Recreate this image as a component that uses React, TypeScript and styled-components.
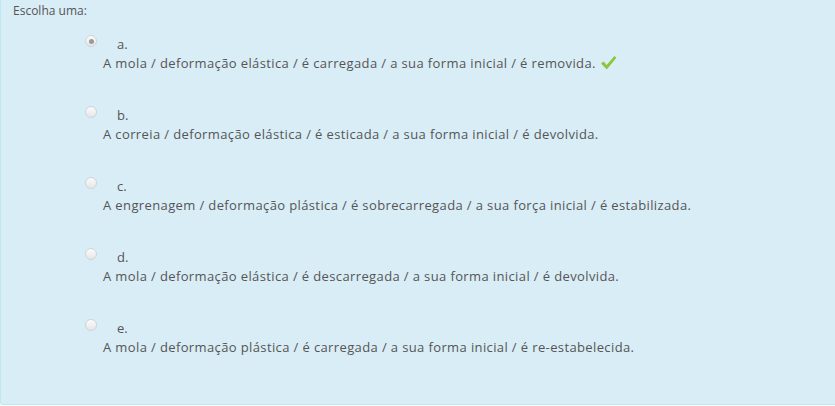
import React from "react";
import styled, { createGlobalStyle } from "styled-components";

const Global = createGlobalStyle`
  html, body { margin: 0; padding: 0; background: #fff; }
  body { font-family: "Open Sans", "Liberation Sans", sans-serif; }
`;

const Panel = styled.div`
  box-sizing: border-box;
  height: 405px;
  background: #d9edf7;
  border-left: 1px solid #bce8f1;
  border-bottom: 1px solid #bce8f1;
  border-bottom-left-radius: 3px;
  padding: 2px 0 0 12px;
  color: #555;
  font-size: 12.5px;
`;

const Prompt = styled.div`
  font-size: 12px;
  line-height: 18px;
  margin-bottom: 14px;
`;

const Options = styled.div`
  display: flex;
  flex-direction: column;
  gap: 33px;
  padding-left: 72px;
`;

const Option = styled.div`
  display: flex;
  flex-direction: column;
`;

const Head = styled.div`
  display: flex;
  align-items: center;
  height: 20px;
`;

const Radio = styled.span<{ $checked?: boolean }>`
  box-sizing: border-box;
  width: 12px;
  height: 12px;
  border-radius: 50%;
  border: 1px solid #cfd3d6;
  background: linear-gradient(#fbfbfb, #e6e6e6);
  display: flex;
  align-items: center;
  justify-content: center;
  margin-top: -6px;
  &::after {
    content: "";
    display: ${(p) => (p.$checked ? "block" : "none")};
    width: 5px;
    height: 5px;
    border-radius: 50%;
    background: #9a9a9a;
  }
`;

const Num = styled.span`
  margin-left: 20px;
  line-height: 20px;
  font-size: 13px;
`;

const Text = styled.div`
  padding-left: 18px;
  line-height: 18px;
  font-size: 13px;
  letter-spacing: 0.38px;
  display: flex;
  align-items: center;
`;

const Check = () => (
  <svg width="17" height="16" viewBox="0 0 17 16" style={{ marginLeft: 4 }}>
    <path d="M1 8.6 L3.8 6.4 L6.6 10 L14.4 1 L16.4 2.8 L6.8 14.6 Z" fill="#8cc63e" />
  </svg>
);

const items = [
  { n: "a.", t: "A mola / deformação elástica / é carregada / a sua forma inicial / é removida.", checked: true },
  { n: "b.", t: "A correia / deformação elástica / é esticada / a sua forma inicial / é devolvida." },
  { n: "c.", t: "A engrenagem / deformação plástica / é sobrecarregada / a sua força inicial / é estabilizada." },
  { n: "d.", t: "A mola / deformação elástica / é descarregada / a sua forma inicial / é devolvida." },
  { n: "e.", t: "A mola / deformação plástica / é carregada / a sua forma inicial / é re-estabelecida." },
];

export default function App() {
  return (
    <>
      <Global />
      <Panel>
        <Prompt>Escolha uma:</Prompt>
        <Options>
          {items.map((it) => (
            <Option key={it.n}>
              <Head>
                <Radio $checked={it.checked} />
                <Num>{it.n}</Num>
              </Head>
              <Text>
                {it.t}
                {it.checked && <Check />}
              </Text>
            </Option>
          ))}
        </Options>
      </Panel>
    </>
  );
}
